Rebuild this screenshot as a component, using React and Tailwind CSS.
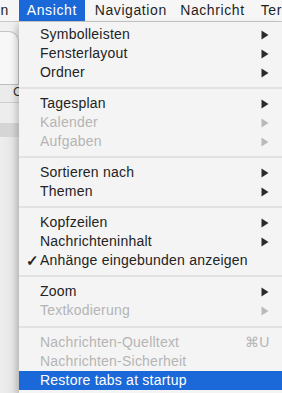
import React from "react";

const Arrow = ({ disabled }) => (
  <svg width="8" height="10" viewBox="0 0 8 10" className="shrink-0">
    <path d="M0.5 0.5 L7.5 5 L0.5 9.5 Z" fill={disabled ? "#b9b9b9" : "#2a2a2a"} />
  </svg>
);

const Item = ({ label, arrow, disabled, check, shortcut, active }) => (
  <div
    className={
      "h-[19px] flex items-center pl-[21px] " +
      (shortcut ? "pr-[12px] " : "pr-[13px] ") +
      (active ? "bg-[#1b69d8] text-white" : disabled ? "text-[#b4b4b4]" : "text-[#232323]")
    }
  >
    <span className="w-0 relative">
      {check && (
        <span className="absolute left-[-14px] top-[-10px] text-[15px] leading-[19px] font-bold">✓</span>
      )}
    </span>
    <span className="flex-1 whitespace-nowrap">{label}</span>
    {arrow && <Arrow disabled={disabled} />}
    {shortcut && <span className="whitespace-nowrap tracking-[0.6px]">{shortcut}</span>}
  </div>
);

const Sep = ({ h = "h-[12px]" }) => (
  <div className={h + " flex items-center"}>
    <div className="h-[2px] w-full bg-[#e2e2e2]" />
  </div>
);

export default function App() {
  return (
    <div
      className="w-[282px] h-[393px] overflow-hidden bg-[#ececec] flex flex-col text-[14px] tracking-[0.22px]"
      style={{ fontFamily: '"Liberation Sans", Arial, sans-serif' }}
    >
      {/* menu bar */}
      <div className="h-[22px] shrink-0 flex items-stretch bg-[#f6f6f6] border-b border-[#c9c9c9] text-[#1f1f1f] tracking-[0.6px] whitespace-nowrap">
        <div className="w-[19px] flex items-center justify-end pr-[10px]">en</div>
        <div className="w-[67px] bg-[#1b69d8] text-white flex items-center justify-center">Ansicht</div>
        <div className="w-[88px] flex items-center pl-[10px]">Navigation</div>
        <div className="w-[82px] flex items-center pl-[9px]">Nachricht</div>
        <div className="flex items-center pl-[9px]">Ter</div>
      </div>

      <div className="flex flex-1 min-h-0">
        {/* window behind */}
        <div className="w-[19px] shrink-0 flex flex-col bg-[#ececec]">
          <div className="h-[9px] bg-[#f0f0f0]" />
          <div className="h-[54px] rounded-tr-[10px] bg-[#f7f7f7] border border-l-0 border-[#c4c4c4] border-b-[#bdbdbd]" />
          <div className="h-[17px] relative bg-[#ebebeb]">
            <span className="absolute left-[13px] top-[-3px] text-[13px] text-[#333]">C</span>
          </div>
          <div className="h-[1px] bg-[#cfcfcf]" />
          <div className="h-[20px] bg-[#ededed]" />
          <div className="h-[14px] bg-[#d5d5d5]" />
          <div className="flex-1 bg-gradient-to-r from-[#eeeeee] to-[#e2e2e2]" />
        </div>

        {/* dropdown menu */}
        <div className="flex-1 bg-[#f4f4f4] pt-[3px] shadow-[-3px_2px_6px_rgba(0,0,0,0.18)] relative">
          <Item label="Symbolleisten" arrow />
          <Item label="Fensterlayout" arrow />
          <Item label="Ordner" arrow />
          <Sep />
          <Item label="Tagesplan" arrow />
          <Item label="Kalender" arrow disabled />
          <Item label="Aufgaben" arrow disabled />
          <Sep />
          <Item label="Sortieren nach" arrow />
          <Item label="Themen" arrow />
          <Sep />
          <Item label="Kopfzeilen" arrow />
          <Item label="Nachrichteninhalt" arrow />
          <Item label="Anhänge eingebunden anzeigen" check />
          <Sep />
          <Item label="Zoom" arrow />
          <Item label="Textkodierung" arrow disabled />
          <Sep h="h-[13px]" />
          <Item label="Nachrichten-Quelltext" disabled shortcut="⌘U" />
          <Item label="Nachrichten-Sicherheit" disabled />
          <Item label="Restore tabs at startup" active />
        </div>
      </div>
    </div>
  );
}
